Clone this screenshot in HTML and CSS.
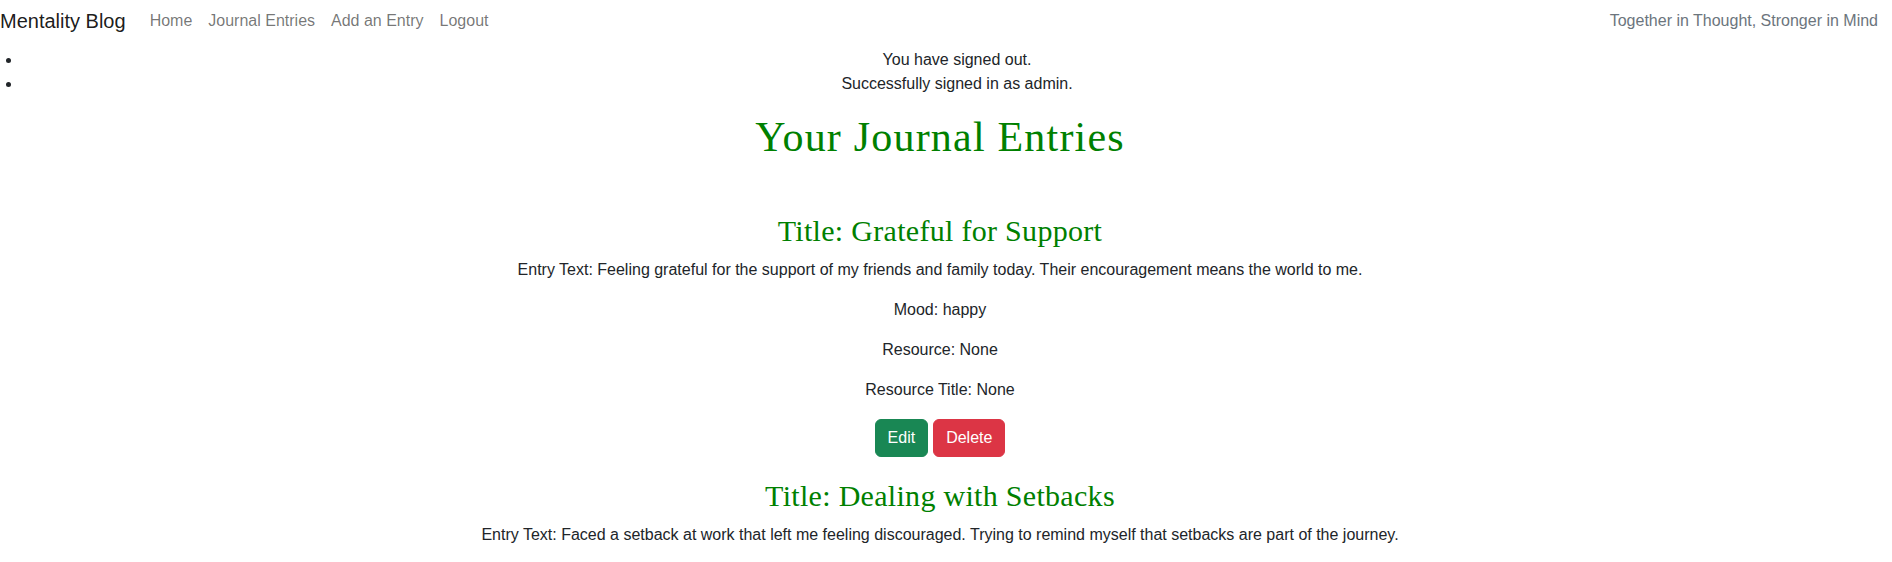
FILE: index.html
```html
<!DOCTYPE html>
<html lang="en">
<head>
<meta charset="utf-8">
<title>Mentality Blog</title>
<link rel="stylesheet" href="styles.css">
</head>
<body>
<nav class="navbar">
  <a class="brand" href="#">Mentality Blog</a>
  <ul class="nav-links">
    <li><a class="nav-link" href="#">Home</a></li>
    <li><a class="nav-link" href="#">Journal Entries</a></li>
    <li><a class="nav-link" href="#">Add an Entry</a></li>
    <li><a class="nav-link" href="#">Logout</a></li>
  </ul>
  <span class="tagline">Together in Thought, Stronger in Mind</span>
</nav>
<ul class="messages">
  <li>You have signed out.</li>
  <li>Successfully signed in as admin.</li>
</ul>
<main class="content">
  <h1 class="page-title">Your Journal Entries</h1>
  <section class="entry">
    <h3 class="entry-title">Title: Grateful for Support</h3>
    <p>Entry Text: Feeling grateful for the support of my friends and family today. Their encouragement means the world to me.</p>
    <p>Mood: happy</p>
    <p>Resource: None</p>
    <p>Resource Title: None</p>
    <div class="actions">
      <a class="btn btn-edit" href="#">Edit</a>
      <a class="btn btn-delete" href="#">Delete</a>
    </div>
  </section>
  <section class="entry">
    <h3 class="entry-title">Title: Dealing with Setbacks</h3>
    <p>Entry Text: Faced a setback at work that left me feeling discouraged. Trying to remind myself that setbacks are part of the journey.</p>
  </section>
</main>
</body>
</html>
```
FILE: styles.css
```css
html, body {
  margin: 0;
  padding: 0;
  background: #fff;
}
body {
  font-family: "Liberation Sans", Arial, sans-serif;
  font-size: 16px;
  line-height: 1.5;
  color: #212529;
}
a {
  text-decoration: none;
}
.navbar {
  display: flex;
  align-items: center;
  padding: 1px 14px 7px 0;
}
.brand {
  font-size: 20px;
  line-height: 30px;
  padding: 5px 0;
  margin-right: 16px;
  color: rgba(0, 0, 0, 0.9);
}
.nav-links {
  display: flex;
  list-style: none;
  margin: 0;
  padding: 0;
}
.nav-link {
  display: block;
  padding: 8px;
  line-height: 24px;
  color: rgba(0, 0, 0, 0.55);
}
.tagline {
  margin-left: auto;
  color: #6c757d;
  line-height: 24px;
}
.messages {
  margin: 0;
  padding-left: 22px;
  text-align: center;
}
.content {
  padding-right: 12px;
  text-align: center;
}
.page-title {
  font-family: "Liberation Serif", "Times New Roman", serif;
  font-weight: 400;
  font-size: 42px;
  line-height: 48px;
  letter-spacing: 1.2px;
  color: #008000;
  margin: 17px 0 52px;
}
.entry-title {
  font-family: "Liberation Serif", "Times New Roman", serif;
  font-weight: 400;
  font-size: 30px;
  line-height: 36px;
  letter-spacing: 0.3px;
  color: #008000;
  margin: 0 0 9px;
}
.entry p {
  margin: 0 0 16px;
}
.actions {
  display: flex;
  justify-content: center;
  gap: 5px;
  padding-top: 1px;
  margin-bottom: 21px;
}
.btn {
  display: inline-block;
  padding: 6px 12px;
  font-size: 16px;
  line-height: 24px;
  border: 1px solid transparent;
  border-radius: 6px;
  color: #fff;
}
.btn-edit {
  background: #198754;
  border-color: #198754;
}
.btn-delete {
  background: #dc3545;
  border-color: #dc3545;
}
```
